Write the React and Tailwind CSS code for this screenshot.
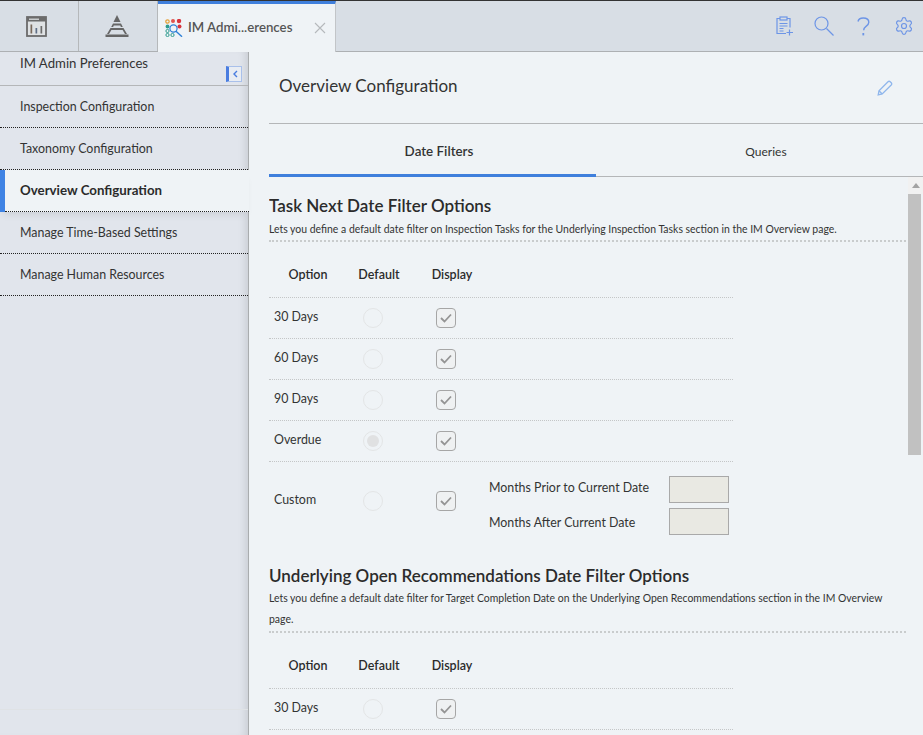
import React from "react";
import { Settings } from "lucide-react";

const font = "font-['Lato','Noto_Sans',sans-serif]";

function DashIcon() {
  return (
    <svg width="21" height="21" viewBox="0 0 21 21" fill="none">
      <rect x="1" y="1" width="19" height="19" fill="#dfe2e4" stroke="#6b6b6b" strokeWidth="1.8" />
      <rect x="1" y="1" width="19" height="4.5" fill="#6b6b6b" />
      <rect x="3" y="2.5" width="10" height="1.5" fill="#c9ccce" />
      <rect x="4.5" y="8.5" width="1.7" height="9" fill="#7a6a5c" />
      <rect x="9.5" y="12" width="1.7" height="5.5" fill="#5f6f86" />
      <rect x="14.5" y="10" width="1.7" height="7.5" fill="#6b6b6b" />
    </svg>
  );
}

function PyramidIcon() {
  return (
    <svg width="24" height="22" viewBox="0 0 24 22" fill="#666">
      <polygon points="12,0 15.5,7 8.5,7" />
      <path d="M8 8.5h8l1.8 3.5h-1.9l-.7-1.5H8.8L8.1 12H6.2z" />
      <path d="M5.5 13h13l3.5 6h-2l-2.4-4H6.4L4 19H2z" />
      <rect x="0.5" y="19.5" width="23" height="2.5" />
    </svg>
  );
}

function AppIcon() {
  return (
    <svg width="18" height="18" viewBox="0 0 18 18" fill="none">
      <circle cx="2.5" cy="2.5" r="1.7" stroke="#e5a13a" strokeWidth="1.2" />
      <circle cx="8" cy="2" r="2" fill="#e0554f" />
      <circle cx="14" cy="2" r="2.2" fill="#d8343c" />
      <circle cx="2.5" cy="7.5" r="1.9" fill="#2f9c8f" />
      <circle cx="14.5" cy="7.5" r="2" fill="#d8343c" />
      <circle cx="2.5" cy="12" r="1.6" stroke="#2f9c8f" />
      <circle cx="2.5" cy="16" r="1.6" stroke="#2f9c8f" />
      <circle cx="7.5" cy="16" r="1.6" stroke="#2f9c8f" />
      <circle cx="8.5" cy="9.5" r="3.6" fill="#eff3f6" stroke="#2c7fd6" strokeWidth="1.2" />
      <path d="M11 12.2l6 5.5" stroke="#2c7fd6" strokeWidth="1.4" />
    </svg>
  );
}

function ClipboardIcon() {
  return (
    <svg width="18" height="20" viewBox="0 0 18 20" fill="none" stroke="#6d95e6" strokeWidth="1.2">
      <path d="M4 2.5H1v15h9M11 2.5h3v9" />
      <rect x="4" y="1" width="7" height="3" />
      <path d="M3.5 7.5h8M3.5 10h8M3.5 12.5h4M3.5 15h4" />
      <path d="M13.5 13.5v6M10.5 16.5h6.5" />
    </svg>
  );
}

function SearchIcon() {
  return (
    <svg width="20" height="20" viewBox="0 0 20 20" fill="none" stroke="#6d95e6" strokeWidth="1.2">
      <circle cx="7.5" cy="7.5" r="6.5" />
      <path d="M12.5 12.5l7 7" />
    </svg>
  );
}

function HelpIcon() {
  return (
    <svg width="13" height="19" viewBox="0 0 13 19" fill="none" stroke="#6d95e6" strokeWidth="1.4">
      <path d="M1 4.5C1.500 2 3.500 1 6.200 1c3.200 0 5.600 1.600 5.600 4.200 0 2-1.200 3-2.800 4.100-1.400 1-2.300 2-2.300 4" />
      <rect x="5.400" y="16" width="1.800" height="2.400" fill="#6d95e6" stroke="none" />
    </svg>
  );
}

function Pencil() {
  return (
    <svg width="16" height="16" viewBox="0 0 16 16" fill="none" stroke="#8fb6ec" strokeWidth="1.3">
      <path d="M1.2 14.8l.8-4L11 1.8a1.6 1.6 0 0 1 2.2 0l1 1a1.6 1.6 0 0 1 0 2.2l-9 9z" />
      <path d="M2 10.8l3.2 3.2" />
    </svg>
  );
}

function Radio({ on }) {
  return (
    <div className="w-5 h-5 rounded-full border border-[#e3e5e6] flex items-center justify-center">
      {on && <div className="w-3 h-3 rounded-full bg-[#e0e1e2]" />}
    </div>
  );
}

function Check() {
  return (
    <div className="w-5 h-5 rounded-[4px] border border-[#a6a6a6] bg-[#eff1f2] flex items-center justify-center">
      <svg width="12" height="10" viewBox="0 0 12 10" fill="none" stroke="#949494" strokeWidth="1.8">
        <path d="M1 5l3.500 3.500L11 1.500" />
      </svg>
    </div>
  );
}

function HeadRow() {
  return (
    <div className="flex items-center h-[56px] pt-[12px] w-[464px] border-b border-dotted border-[#c4c6c7] text-[12.5px] font-semibold text-[#2b2b2b]">
      <div className="w-[78px] text-center">Option</div>
      <div className="w-[64px] text-center">Default</div>
      <div className="w-[74px] ml-[4px] text-center">Display</div>
    </div>
  );
}

function OptionRow({ label, on }) {
  return (
    <div className="flex items-center h-[41px] w-[464px] border-b border-dotted border-[#c4c6c7] text-[12.4px] text-[#333]">
      <div className="w-[94px] pl-[5px] -mt-[2px]">{label}</div>
      <Radio on={on} />
      <div className="ml-[53px]">
        <Check />
      </div>
    </div>
  );
}

function SectionHead({ title, children, descClass = "" }) {
  return (
    <div>
      <h2 className="text-[17px] leading-6 font-semibold text-[#2b2b2b]">{title}</h2>
      <div className={`${descClass} pt-px text-[10.45px] leading-[21px] text-[#333] border-b-2 border-dotted border-[#c9cccd] w-[637px]`}>
        {children}
      </div>
    </div>
  );
}

const sideItems = [
  "Inspection Configuration",
  "Taxonomy Configuration",
  "Overview Configuration",
  "Manage Time-Based Settings",
  "Manage Human Resources",
];

export default function App() {
  return (
    <div className={`${font} w-[923px] h-[735px] overflow-hidden flex flex-col bg-[#eff3f6] text-[#333]`}>
      <div className="h-[52px] shrink-0 flex bg-[#d8dee5] border-t border-t-[#333] border-b border-b-[#adb0b3]">
        <div className="w-[79px] flex items-center justify-center border-r border-[#b5b8ba] pr-[5px]">
          <DashIcon />
        </div>
        <div className="w-[79px] flex items-center justify-center border-r border-[#b5b8ba] pr-[2px]">
          <PyramidIcon />
        </div>
        <div className="w-[178px] -mb-px bg-[#eff3f6] border-t-[3px] border-t-[#3f7fdc] border-r border-r-[#c2c5c8] flex items-center pl-[7px] z-10">
          <AppIcon />
          <span className="ml-[5px] w-[110px] text-[13.250px] font-semibold text-[#555]">IM Admi...erences</span>
          <span className="ml-[16px] text-[#b5b9bc]">
            <svg width="12" height="12" viewBox="0 0 12 12" stroke="currentColor" strokeWidth="1.1">
              <path d="M1 1l10 10M11 1L1 11" />
            </svg>
          </span>
        </div>
        <div className="flex-1 flex items-center justify-end pr-[9px]">
          <ClipboardIcon />
          <div className="ml-[20px]">
            <SearchIcon />
          </div>
          <div className="ml-[23px]">
            <HelpIcon />
          </div>
          <div className="ml-[24px]">
            <Settings size={20} color="#6d95e6" strokeWidth={1.4} />
          </div>
        </div>
      </div>

      <div className="flex flex-1 min-h-0">
        <aside className="w-[249px] shrink-0 bg-[#e1e5ec] border-r border-[#a9acae] shadow-[inset_-8px_0_8px_-6px_rgba(0,0,0,0.12)] relative flex flex-col">
          <div className="h-[34px] shrink-0 border-b border-[#b4b6b8] pl-5 text-[13.2px] leading-[22px] text-[#333]">
            IM Admin Preferences
          </div>
          <button className="absolute right-[6px] top-[14px] w-4 h-4 bg-[#e9edf3] border border-[#a9c0ea] border-l-[3px] border-l-[#4a7de0] flex items-center justify-center">
            <svg width="6" height="8" viewBox="0 0 6 8" fill="none" stroke="#4a7de0" strokeWidth="1.4">
              <path d="M5 1L2 4l3 3" />
            </svg>
          </button>
          {sideItems.map((item) =>
            item === "Overview Configuration" ? (
              <div
                key={item}
                className="h-[42px] shrink-0 mr-[-1px] flex bg-[#eff3f6] relative shadow-[0_6px_8px_-4px_rgba(0,0,0,0.1)]"
              >
                <div className="w-[5px] bg-[#3f83e4]" />
                <div className="flex-1 pl-[15px] border-b border-dotted border-[#222] flex items-center text-[13.3px] font-bold text-[#2b2b2b]">
                  {item}
                </div>
              </div>
            ) : (
              <div key={item} className="h-[42px] shrink-0 pl-5 pt-[2px] border-b border-dotted border-[#222] flex items-center text-[12.4px] text-[#333]">
                {item}
              </div>
            )
          )}
          <div className="mt-auto h-[26px] border-t border-[#dfe2e5]" />
        </aside>

        <main className="flex-1 min-w-0 flex flex-col">
          <div className="ml-5 h-[72px] shrink-0 border-b border-[#b4b6b8] flex items-center justify-between pl-[10px] pr-[30px]">
            <h1 className="text-[17px] text-[#333] -mt-[3px]">Overview Configuration</h1>
            <Pencil />
          </div>
          <div className="ml-5 h-[53px] shrink-0 flex border-b border-[#b4b6b8] text-[12px] text-[#333]">
            <div className="w-[327px] -mb-px flex items-center justify-center text-[13.4px] font-semibold border-b-[3px] border-[#3f7fdc] pl-[13px] pt-[4px]">
              Date Filters
            </div>
            <div className="flex-1 flex items-center justify-center pl-[13px] pt-[3px]">Queries</div>
          </div>
          <div className="flex flex-1 min-h-0">
            <div className="ml-5 flex-1 min-w-0 overflow-hidden pt-[17px]">
              <SectionHead title="Task Next Date Filter Options">
                Lets you define a default date filter on Inspection Tasks for the Underlying Inspection Tasks section in the IM Overview page.
              </SectionHead>
              <HeadRow />
              <OptionRow label="30 Days" />
              <OptionRow label="60 Days" />
              <OptionRow label="90 Days" />
              <OptionRow label="Overdue" on />
              <div className="flex items-center h-[78px] w-[464px] text-[12.4px] text-[#333]">
                <div className="w-[94px] pl-[5px] -mt-[2px]">Custom</div>
                <Radio />
                <div className="ml-[53px]">
                  <Check />
                </div>
                <div className="ml-[33px] mt-[9px] flex flex-col gap-[5px]">
                  <div className="flex items-center justify-between w-[240px]">
                    <span className="-mt-[3px]">Months Prior to Current Date</span>
                    <div className="w-[60px] h-[27px] bg-[#e9e9e3] border border-[#a9a9a9]" />
                  </div>
                  <div className="flex items-center justify-between w-[240px]">
                    <span className="mt-[3px]">Months After Current Date</span>
                    <div className="w-[60px] h-[27px] bg-[#e9e9e3] border border-[#a9a9a9]" />
                  </div>
                </div>
              </div>
              <div className="mt-[24px]">
                <SectionHead title="Underlying Open Recommendations Date Filter Options" descClass="-mt-px pb-px">
                  Lets you define a default date filter for Target Completion Date on the Underlying Open Recommendations section in the IM Overview
                  <br />
                  page.
                </SectionHead>
              </div>
              <HeadRow />
              <OptionRow label="30 Days" />
            </div>
            <div className="w-[15px] shrink-0 flex flex-col items-start">
              <div className="h-[17px] w-full bg-[#f1f1f1] flex items-center justify-center">
                <div className="w-0 h-0 border-x-[4px] border-x-transparent border-b-[5px] border-b-[#a3a3a3]" />
              </div>
              <div className="w-[13px] h-[261px] bg-[#c1c1c1]" />
            </div>
          </div>
        </main>
      </div>
    </div>
  );
}
